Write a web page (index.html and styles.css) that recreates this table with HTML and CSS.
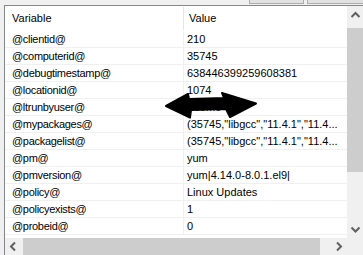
FILE: index.html
```html
<!DOCTYPE html>
<html>
<head>
<meta charset="utf-8">
<link rel="stylesheet" href="styles.css">
</head>
<body>
<div class="window">
  <div class="topbar">
    <div class="btn btn-a"></div>
    <div class="btn btn-b"></div>
  </div>
  <div class="listbox">
    <div class="main">
      <div class="content">
        <div class="header">
          <div class="hcell c1">Variable</div>
          <div class="hcell c2">Value</div>
        </div>
        <div class="row"><div class="cell c1">@clientid@</div><div class="cell c2">210</div></div>
        <div class="row"><div class="cell c1">@computerid@</div><div class="cell c2">35745</div></div>
        <div class="row"><div class="cell c1">@debugtimestamp@</div><div class="cell c2">638446399259608381</div></div>
        <div class="row"><div class="cell c1">@locationid@</div><div class="cell c2">1074</div></div>
        <div class="row"><div class="cell c1">@ltrunbyuser@</div><div class="cell c2">Scome</div></div>
        <div class="row"><div class="cell c1">@mypackages@</div><div class="cell c2">(35745,"libgcc","11.4.1","11.4...</div></div>
        <div class="row"><div class="cell c1">@packagelist@</div><div class="cell c2">(35745,"libgcc","11.4.1","11.4...</div></div>
        <div class="row"><div class="cell c1">@pm@</div><div class="cell c2">yum</div></div>
        <div class="row"><div class="cell c1">@pmversion@</div><div class="cell c2">yum|4.14.0-8.0.1.el9|</div></div>
        <div class="row"><div class="cell c1">@policy@</div><div class="cell c2">Linux Updates</div></div>
        <div class="row"><div class="cell c1">@policyexists@</div><div class="cell c2">1</div></div>
        <div class="row"><div class="cell c1">@probeid@</div><div class="cell c2">0</div></div>
      </div>
      <div class="vscroll">
        <div class="sbtn"><svg width="17" height="17" viewBox="0 0 17 17"><polyline points="4.5,11 8.5,7 12.5,11" fill="none" stroke="#606060" stroke-width="2"/></svg></div>
        <div class="vtrack-top"></div>
        <div class="vthumb"></div>
        <div class="vtrack-bottom"></div>
        <div class="sbtn"><svg width="17" height="17" viewBox="0 0 17 17"><polyline points="4.5,6.5 8.5,10.5 12.5,6.5" fill="none" stroke="#606060" stroke-width="2"/></svg></div>
      </div>
    </div>
    <div class="hbar">
      <div class="hscroll">
        <div class="sbtn"><svg width="17" height="17" viewBox="0 0 17 17"><polyline points="10,4.5 6,8.5 10,12.5" fill="none" stroke="#606060" stroke-width="2"/></svg></div>
        <div class="hthumb"></div>
        <div class="htrack"></div>
        <div class="sbtn"><svg width="17" height="17" viewBox="0 0 17 17"><polyline points="7,4.5 11,8.5 7,12.5" fill="none" stroke="#606060" stroke-width="2"/></svg></div>
      </div>
      <div class="corner"></div>
    </div>
  </div>
  <svg class="arrow" width="363" height="255" viewBox="0 0 363 255">
    <path d="M166,106 L188,94 L189,99 L224,98 L222,93 L256,103.5 L230,117 L226,109 L191,110 L190,117.5 Z" fill="#000" stroke="#000" stroke-width="2" stroke-linejoin="round"/>
  </svg>
</div>
</body>
</html>
```

FILE: styles.css
```css
* { box-sizing: border-box; }

html, body {
  margin: 0;
  padding: 0;
  background: #f0f0f0;
}

.window {
  position: relative;
  width: 363px;
  height: 255px;
  overflow: hidden;
  background: #f0f0f0;
  font-family: "Liberation Sans", Arial, sans-serif;
  font-size: 11px;
  color: #000;
}

.topbar {
  height: 5px;
  display: flex;
  gap: 3px;
  padding-left: 249px;
}

.btn {
  height: 4px;
  background: #e1e1e1;
  border: 1px solid #adadad;
  border-top: none;
}

.btn-a { width: 55px; }
.btn-b { flex: 1; margin-right: -4px; }

.listbox {
  margin-left: 4px;
  width: 365px;
  height: 260px;
  border-left: 1px solid #828790;
  border-top: 1px solid #828790;
  background: #fff;
  display: flex;
  flex-direction: column;
}

.main {
  display: flex;
  height: 232px;
}

.content {
  width: 342px;
  background: #fff;
}

.header {
  display: flex;
  height: 25px;
  line-height: 25px;
}

.hcell {
  white-space: nowrap;
  overflow: hidden;
}

.hcell.c1 {
  width: 179px;
  padding-left: 7px;
  border-right: 1px solid #e5e5e5;
  margin: 1px 0;
  line-height: 23px;
}

.hcell.c2 {
  flex: 1;
  padding-left: 5px;
}

.row {
  display: flex;
  height: 17px;
  border-bottom: 1px solid #f0f0f0;
  line-height: 16px;
}

.cell {
  white-space: nowrap;
  overflow: hidden;
}

.cell.c1 {
  width: 179px;
  padding-left: 7px;
  border-right: 1px solid #f0f0f0;
  letter-spacing: -0.3px;
}

.cell.c2 {
  flex: 1;
  min-width: 0;
  padding-left: 3px;
}

.vscroll {
  width: 17px;
  background: #f0f0f0;
  display: flex;
  flex-direction: column;
}

.sbtn {
  width: 17px;
  height: 17px;
  flex: none;
}

.sbtn svg { display: block; }

.vtrack-top { height: 5px; }

.vthumb {
  height: 144px;
  width: 17px;
  background: #cdcdcd;
}

.vtrack-bottom { flex: 1; }

.hbar {
  display: flex;
  height: 17px;
}

.hscroll {
  width: 342px;
  display: flex;
  background: #f0f0f0;
}

.hthumb {
  width: 297px;
  height: 17px;
  margin-left: 1px;
  background: #cdcdcd;
}

.htrack { flex: 1; }

.corner {
  width: 17px;
  background: #f0f0f0;
}

.arrow {
  position: absolute;
  left: 0;
  top: 0;
  pointer-events: none;
}
```
